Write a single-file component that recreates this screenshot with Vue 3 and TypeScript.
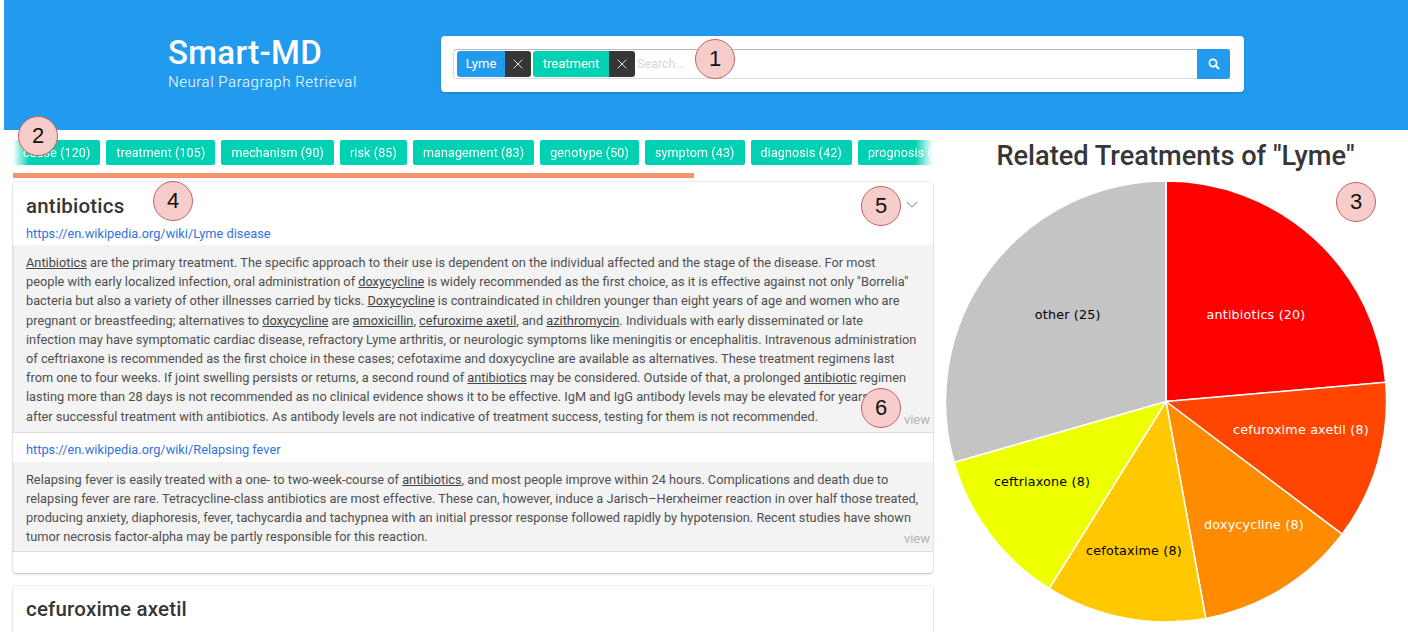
<script setup lang="ts">
const tags = [
  'cause (120)', 'treatment (105)', 'mechanism (90)', 'risk (85)', 'management (83)',
  'genotype (50)', 'symptom (43)', 'diagnosis (42)', 'prognosis (40)',
]

// [word] marks an underlined term in a passage line
function parts(line: string) {
  return line.split(/(\[[^\]]+\])/).filter(Boolean).map(s => ({
    mark: s.startsWith('['),
    text: s.replace(/[\[\]]/g, ''),
  }))
}

const passages = [
  {
    url: 'https://en.wikipedia.org/wiki/Lyme disease',
    lines: [
      '[Antibiotics] are the primary treatment. The specific approach to their use is dependent on the individual affected and the stage of the disease. For most',
      'people with early localized infection, oral administration of [doxycycline] is widely recommended as the first choice, as it is effective against not only "Borrelia"',
      'bacteria but also a variety of other illnesses carried by ticks. [Doxycycline] is contraindicated in children younger than eight years of age and women who are',
      'pregnant or breastfeeding; alternatives to [doxycycline] are [amoxicillin], [cefuroxime axetil], and [azithromycin]. Individuals with early disseminated or late',
      'infection may have symptomatic cardiac disease, refractory Lyme arthritis, or neurologic symptoms like meningitis or encephalitis. Intravenous administration',
      'of ceftriaxone is recommended as the first choice in these cases; cefotaxime and doxycycline are available as alternatives. These treatment regimens last',
      'from one to four weeks. If joint swelling persists or returns, a second round of [antibiotics] may be considered. Outside of that, a prolonged [antibiotic] regimen',
      'lasting more than 28 days is not recommended as no clinical evidence shows it to be effective. IgM and IgG antibody levels may be elevated for years',
      'after successful treatment with antibiotics. As antibody levels are not indicative of treatment success, testing for them is not recommended.',
    ],
  },
  {
    url: 'https://en.wikipedia.org/wiki/Relapsing fever',
    lines: [
      'Relapsing fever is easily treated with a one- to two-week-course of [antibiotics], and most people improve within 24 hours. Complications and death due to',
      'relapsing fever are rare. Tetracycline-class antibiotics are most effective. These can, however, induce a Jarisch\u2013Herxheimer reaction in over half those treated,',
      'producing anxiety, diaphoresis, fever, tachycardia and tachypnea with an initial pressor response followed rapidly by hypotension. Recent studies have shown',
      'tumor necrosis factor-alpha may be partly responsible for this reaction.',
    ],
  },
]

// pie drawn from the measured slice boundaries (degrees clockwise from 12 o'clock)
const cx = 233
const cy = 225.5
const r = 220.5
const slices = [
  { from: 0, to: 85, fill: '#ff0000' },
  { from: 85, to: 127, fill: '#ff4500' },
  { from: 127, to: 169.6, fill: '#ff8c00' },
  { from: 169.6, to: 212, fill: '#ffc800' },
  { from: 212, to: 254, fill: '#eeff00' },
  { from: 254, to: 360, fill: '#c4c4c4' },
]
function point(deg: number) {
  const a = (deg * Math.PI) / 180
  return `${(cx + r * Math.sin(a)).toFixed(2)} ${(cy - r * Math.cos(a)).toFixed(2)}`
}
function slicePath(from: number, to: number) {
  const large = to - from > 180 ? 1 : 0
  return `M${cx} ${cy}L${point(from)}A${r} ${r} 0 ${large} 1 ${point(to)}Z`
}
const labels = [
  { text: 'other (25)', x: 134.7, y: 138.7, fill: '#000' },
  { text: 'antibiotics (20)', x: 323, y: 138.7, fill: '#fff' },
  { text: 'cefuroxime axetil (8)', x: 368, y: 253, fill: '#fff' },
  { text: 'doxycycline (8)', x: 321, y: 348, fill: '#fff' },
  { text: 'cefotaxime (8)', x: 201, y: 374, fill: '#000' },
  { text: 'ceftriaxone (8)', x: 109, y: 305, fill: '#000' },
]

const callouts = [
  { n: 1, cls: 'c1' }, { n: 2, cls: 'c2' }, { n: 3, cls: 'c3' },
  { n: 4, cls: 'c4' }, { n: 5, cls: 'c5' }, { n: 6, cls: 'c6' },
]
</script>

<template>
  <div class="page">
    <header class="hero">
      <div class="brand">
        <h1>Smart-MD</h1>
        <p>Neural Paragraph Retrieval</p>
      </div>
      <div class="search-card">
        <div class="search">
          <span class="chip chip--blue">Lyme</span>
          <span class="chip-x">
            <svg width="10" height="10" viewBox="0 0 10 10"><path d="M.5.5l9 9M9.5.5l-9 9" stroke="#ddd" stroke-width="1" /></svg>
          </span>
          <span class="chip chip--green">treatment</span>
          <span class="chip-x">
            <svg width="10" height="10" viewBox="0 0 10 10"><path d="M.5.5l9 9M9.5.5l-9 9" stroke="#ddd" stroke-width="1" /></svg>
          </span>
          <span class="placeholder">Search...</span>
          <button class="search-btn" type="button">
            <svg width="12" height="12" viewBox="0 0 12 12" fill="none" stroke="#fff" stroke-width="1.7">
              <circle cx="5" cy="5" r="3.6" />
              <path d="M7.7 7.7L11 11" stroke-width="2" />
            </svg>
          </button>
        </div>
      </div>
    </header>

    <main class="main">
      <section class="results">
        <div class="tags">
          <span v-for="t in tags" :key="t" class="tag">{{ t }}</span>
        </div>
        <div class="tag-scroll"></div>

        <article class="card">
          <div class="card-head">
            <h2>antibiotics</h2>
            <svg class="chev" width="12" height="7" viewBox="0 0 12 7" fill="none" stroke="#aaa" stroke-width="1.2"><path d="M1 1l5 5 5-5" /></svg>
          </div>
          <div v-for="p in passages" :key="p.url" class="passage">
            <a class="url">{{ p.url }}</a>
            <div class="body">
              <div v-for="(line, i) in p.lines" :key="i" class="line">
                <template v-for="(s, j) in parts(line)" :key="j">
                  <u v-if="s.mark">{{ s.text }}</u>
                  <template v-else>{{ s.text }}</template>
                </template>
              </div>
              <span class="view">view</span>
            </div>
          </div>
        </article>

        <article class="card card--next">
          <div class="card-head">
            <h2>cefuroxime axetil</h2>
          </div>
        </article>
      </section>

      <aside class="chart">
        <h3>Related Treatments of "Lyme"</h3>
        <svg class="pie" width="475" height="450" viewBox="0 0 475 450">
          <path v-for="s in slices" :key="s.from" :d="slicePath(s.from, s.to)" :fill="s.fill" stroke="#fff" stroke-width="1.5" />
          <text v-for="l in labels" :key="l.text" :x="l.x" :y="l.y + 4.5" :fill="l.fill" text-anchor="middle" class="pie-label">{{ l.text }}</text>
        </svg>
      </aside>
    </main>

    <span v-for="c in callouts" :key="c.n" class="callout" :class="c.cls">{{ c.n }}</span>
  </div>
</template>

<style>
html, body { margin: 0; background: #fff; overflow: hidden; }
</style>

<style scoped>
.page {
  position: relative;
  width: 1408px;
  height: 632px;
  overflow: hidden;
  font-family: Roboto, "Liberation Sans", sans-serif;
  color: #4a4a4a;
  background: #fff;
}

.hero {
  height: 130px;
  margin-left: 4px;
  box-sizing: border-box;
  padding: 35px 164px 0 164px;
  background: #229bef;
  display: flex;
  align-items: flex-start;
}
.brand { width: 273px; color: #fff; }
.brand h1 { margin: 0; font-size: 33px; line-height: 36px; font-weight: 500; letter-spacing: .3px; }
.brand p { margin: 1px 0 0; font-size: 15px; line-height: 20px; font-weight: 300; letter-spacing: .55px; }

.search-card {
  flex: 1;
  height: 56px;
  margin-top: 1px;
  box-sizing: border-box;
  padding: 13px 14px 13px 12px;
  background: #fff;
  border-radius: 4px;
  box-shadow: 0 1px 3px rgba(10, 10, 10, .2);
}
.search {
  height: 30px;
  box-sizing: border-box;
  display: flex;
  align-items: center;
  padding-left: 3px;
  border: 1px solid #dbdbdb;
  border-top-color: #bbb;
  border-radius: 3px;
}
.chip {
  height: 26px;
  padding-bottom: 2px;
  box-sizing: border-box;
  display: flex;
  align-items: center;
  justify-content: center;
  color: #fff;
  font-size: 13px;
  border-radius: 3px 0 0 3px;
}
.chip--blue { width: 48px; background: #229bef; }
.chip--green { width: 76px; margin-left: 2px; background: #00d1b2; }
.chip-x {
  width: 26px;
  height: 26px;
  display: flex;
  align-items: center;
  justify-content: center;
  background: #363636;
  border-radius: 0 3px 3px 0;
}
.placeholder { margin: 0 0 2px 2px; font-size: 12.5px; color: #d6d6d6; }
.search-btn {
  margin-left: auto;
  width: 33px;
  height: 30px;
  margin-right: -1px;
  padding: 0;
  border: 0;
  border-radius: 0 3px 3px 0;
  background: #229bef;
  display: flex;
  align-items: center;
  justify-content: center;
}

.main { display: flex; }

.results { width: 933px; box-sizing: border-box; padding: 10px 0 0 13px; flex: none; }
.tags {
  display: flex;
  gap: 6px;
  height: 25px;
  overflow: hidden;
  -webkit-mask-image: linear-gradient(to right, transparent 0, #000 16px, #000 calc(100% - 18px), transparent 100%);
  mask-image: linear-gradient(to right, transparent 0, #000 16px, #000 calc(100% - 18px), transparent 100%);
}
.tag {
  flex: none;
  height: 25px;
  line-height: 25px;
  padding: 0 10px;
  background: #00d1b2;
  color: #fff;
  font-size: 12.5px;
  letter-spacing: .12px;
  border-radius: 2px;
}
.tag-scroll { width: 681px; height: 5px; margin: 8px 0 4px; background: #f4946c; }

.card {
  background: #fff;
  border-radius: 4px;
  box-shadow: 0 1px 2px rgba(10, 10, 10, .22), 0 0 0 1px rgba(10, 10, 10, .06);
  padding-bottom: 21px;
}
.card--next { margin-top: 13px; height: 60px; padding: 0; }
.card-head {
  height: 42px;
  padding: 0 13px;
  display: flex;
  align-items: center;
  justify-content: space-between;
}
.card-head h2 { margin: 6px 0 0; font-size: 20.5px; font-weight: 500; color: #363636; letter-spacing: .2px; }
.card--next .card-head { height: 40px; }
.chev { margin: 2px 2px 0 0; }

.url {
  display: block;
  height: 21px;
  line-height: 20px;
  padding-left: 13px;
  font-size: 12.8px;
  color: #3273dc;
}
.passage + .passage .url { height: 29px; line-height: 34px; }
.body {
  position: relative;
  padding: 8px 13px 6px;
  background: #f3f3f3;
  border-bottom: 1px solid #dcdcdc;
  box-shadow: inset 1px 0 0 #e4e4e4;
}
.passage + .passage .body { padding-bottom: 5px; }
.line {
  height: 19.2px;
  line-height: 19.2px;
  font-size: 12.78px;
  white-space: nowrap;
  color: #4f4f4f;
}
.line u { text-underline-offset: 1px; color: #444; }
.view {
  position: absolute;
  right: 3px;
  bottom: 5px;
  font-size: 13px;
  line-height: 14px;
  color: #b5b5b5;
}

.chart { flex: 1; min-width: 0; }
.chart h3 {
  margin: 9px 0 0;
  padding-left: 10px;
  width: 465px;
  height: 37px;
  line-height: 34px;
  text-align: center;
  font-size: 27.2px;
  font-weight: 500;
  color: #363636;
}
.pie { display: block; }
.pie-label { font-family: "DejaVu Sans", sans-serif; font-size: 12.7px; letter-spacing: .2px; }

.callout {
  position: absolute;
  width: 40px;
  height: 40px;
  box-sizing: border-box;
  display: flex;
  align-items: center;
  justify-content: center;
  border-radius: 50%;
  background: #f6cdcb;
  border: 1px solid #c4625f;
  font-family: "Liberation Sans", sans-serif;
  font-size: 22px;
  color: #111;
}
.c1 { left: 695px; top: 39px; }
.c2 { left: 18px; top: 116px; }
.c3 { left: 1336px; top: 182px; }
.c4 { left: 153px; top: 181px; }
.c5 { left: 861px; top: 186px; }
.c6 { left: 861px; top: 388px; }
</style>
